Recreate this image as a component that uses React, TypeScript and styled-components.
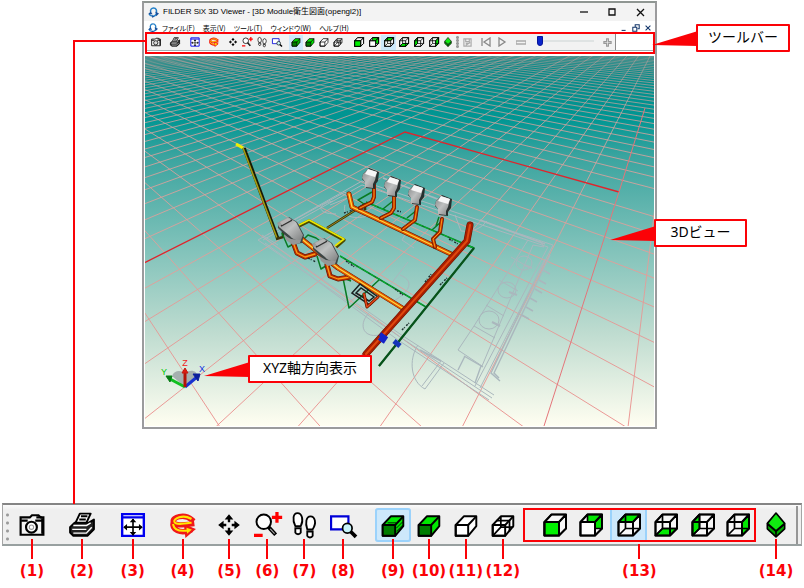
import React from "react";
import styled, { createGlobalStyle } from "styled-components";

const RED = "#fb0207";

const GlobalStyle = createGlobalStyle`
  * { box-sizing: border-box; }
  body { margin: 0; background: #fff; color: #000; font-family: "Noto Sans", "Noto Sans CJK JP", sans-serif; }
  button { padding: 0; border: 0; background: none; font: inherit; color: inherit; }
  svg { display: block; }
`;

const Page = styled.main`
  position: relative;
  padding: 1px 2px 8px;
`;

const ViewerFrame = styled.section`
  position: relative;
  margin: 0 145px 0 140px;
  border: 2px solid #9b9b9d;
  border-top-color: #8f9692;
  background: #fff;
`;

const TitleBar = styled.header`
  display: flex;
  align-items: center;
  height: 18px;
  padding: 0 10px 0 4px;
  gap: 4px;
  background: #f3f3f3;
`;

const Title = styled.h1`
  flex: 1;
  margin: 0;
  font-family: "Liberation Sans", "Noto Sans CJK JP", sans-serif;
  font-size: 8px;
  line-height: 16px;
  font-weight: 400;
  white-space: nowrap;
`;

const WindowButtons = styled.div`
  display: flex;
  gap: 18px;
`;

const MenuBar = styled.nav`
  display: flex;
  align-items: center;
  height: 11px;
  padding: 2px 3px 0 4px;
  gap: 4px;
  overflow: hidden;
`;

const MenuList = styled.div`
  display: flex;
  gap: 8px;
`;

const MenuItem = styled.button`
  font-family: "Noto Sans CJK JP", sans-serif;
  font-size: 7px;
  line-height: 8px;
  font-feature-settings: "palt";
  white-space: nowrap;
`;

const ChildButtons = styled.div`
  display: flex;
  gap: 4px;
  margin-left: auto;
`;

const ToolBar = styled.div`
  display: flex;
  margin-left: 1px;
  height: 22px;
  border: 2px solid ${RED};
  background: linear-gradient(#fff 16px, #9fb0b4 16px, #9fb0b4 17px, #fff 17px);
`;

const ToolSet = styled.div`
  display: flex;
  align-items: center;
  height: 16px;
  background: #f2f2f2;
  border-right: 1px solid #8b8b8b;
`;

const SmallTool = styled.button<{ $w: number; $gap?: number; $on?: boolean }>`
  display: grid;
  place-items: center;
  width: ${(p) => p.$w}px;
  height: 15px;
  margin-left: ${(p) => p.$gap ?? 0}px;
  background: ${(p) => (p.$on ? "#cde8fb" : "transparent")};
`;

const Grip = styled.span<{ $tall?: boolean }>`
  align-self: stretch;
  width: 3px;
  margin: ${(p) => (p.$tall ? "6px 0 2px 3px" : "2px 0 2px 1px")};
  background: radial-gradient(circle, #9a9a9a 1px, transparent 2px) 0 0 / 3px ${(p) => (p.$tall ? 8 : 3)}px;
`;

const Speed = styled.input`
  appearance: none;
  width: 57px;
  height: 14px;
  margin: 0 0 2px 7px;
  background: linear-gradient(#dfe3e3, #dfe3e3) center / 100% 2px no-repeat;
  &::-webkit-slider-thumb {
    appearance: none;
    width: 6px;
    height: 10px;
    background: #0a24cc;
    border: 1px solid #07159a;
    border-radius: 0 0 3px 3px;
  }
`;

const SceneArea = styled.div`
  position: relative;
  margin: 2px 1px 1px;
`;

const SceneSvg = styled.svg`
  width: 100%;
  height: auto;
`;

const Callout = styled.div<{ $w: number }>`
  position: absolute;
  width: ${(p) => p.$w}px;
  height: 28px;
  border: 2px solid ${RED};
  border-radius: 1px;
  background: #fff;
  font-family: "Noto Sans", "Noto Sans CJK JP", sans-serif;
  font-size: 14px;
  line-height: 21px;
  text-align: center;
  white-space: nowrap;
`;

const ToolbarCallout = styled(Callout)`
  top: 21px;
  right: -135px;
`;

const ViewCallout = styled(Callout)`
  top: 163px;
  right: -93px;
`;

const AxisCallout = styled(Callout)`
  bottom: 43px;
  left: 103px;
`;

const Pointer = styled.svg`
  position: absolute;
  top: 5px;
  right: 100%;
`;

const Connector = styled.div`
  position: absolute;
  left: 73px;
  top: 40px;
  width: 72px;
  height: 464px;
  border: solid ${RED};
  border-width: 2px 0 0 2px;
  pointer-events: none;
`;

const Enlarged = styled.section`
  margin-top: 74px;
`;

const Strip = styled.div`
  display: grid;
  grid-template-columns: 6fr 46fr 54fr 48fr 52fr 42fr 34fr 40fr 38fr 13fr 36fr 36fr 38fr 36fr 2fr 234fr 40fr 5fr;
  align-items: center;
  height: 43px;
  border: 1px solid #a5a5a5;
  border-top: 2px solid #858585;
  border-bottom: 2px solid #98a0a0;
  background: linear-gradient(#fbfbfb, #efefef 5px);
`;

const Legend = styled(Strip)`
  position: relative;
  height: 46px;
  margin-top: -9px;
  border-color: transparent;
  background: none;
`;

const BigTool = styled.button<{ $on?: boolean }>`
  display: grid;
  place-items: center;
  height: 34px;
  border-radius: 3px;
  background: ${(p) => (p.$on ? "#cde8fb" : "transparent")};
  box-shadow: ${(p) => (p.$on ? "inset 0 0 0 2px #9bd2fb" : "none")};
`;

const FaceGroup = styled.div`
  display: grid;
  grid-template-columns: 12fr 37fr 38fr 38fr 38fr 38fr 33fr;
  align-items: center;
  height: 34px;
  border: 2px solid ${RED};
`;

const FaceTool = styled.button<{ $on?: boolean }>`
  display: grid;
  place-items: center;
  height: 30px;
  background: ${(p) => (p.$on ? "#cde8fb" : "transparent")};
  border: solid #9bd2fb;
  border-width: ${(p) => (p.$on ? "0 2px" : "0")};
`;

const EndBar = styled.span`
  height: 38px;
  width: 2px;
  background: #969696;
`;

const Mark = styled.span<{ $short?: boolean }>`
  display: flex;
  flex-direction: column;
  align-items: center;
  color: ${RED};
  font: bold 15px/24px "DejaVu Sans", sans-serif;
  white-space: nowrap;
  width: 0;
  justify-self: center;
  &::before {
    content: "";
    flex: none;
    width: 2px;
    height: ${(p) => (p.$short ? 15 : 20)}px;
    margin-top: ${(p) => (p.$short ? 5 : 0)}px;
    background: ${RED};
  }
`;

type Face = "front" | "back" | "top" | "bottom" | "left" | "right";
type IconKind =
  | "camera" | "print" | "fit" | "rotate" | "move" | "zoom" | "walk" | "area"
  | "shadedLines" | "shaded" | "hidden" | "wire" | "iso" | Face;

const FACES: Record<Face, string> = {
  front: "M1.5 9H16V22.5H1.5Z",
  back: "M8.5 1.5H23V15.5H8.5Z",
  top: "M1.5 9L8.5 1.5H23L16 9Z",
  bottom: "M1.5 22.5L8.5 15.5H23L16 22.5Z",
  left: "M1.5 9L8.5 1.5V15.5L1.5 22.5Z",
  right: "M16 9L23 1.5V15.5L16 22.5Z",
};

function FaceCube({ face }: { face: Face }) {
  const solid = face === "front" || face === "back";
  return (
    <g strokeLinejoin="round" stroke="#000" strokeWidth="1.7" fill="none">
      <path d="M1.5 9L8.5 1.5H23V15.5L16 22.5H1.5Z" fill="#f8f8f8" />
      <path d={FACES[face]} fill="#00e800" />
      {solid ? (
        <path d="M1.5 9H16V22.5H1.5ZM16 9L23 1.5" fill={face === "front" ? "#00f000" : "#fff"} />
      ) : (
        <path d="M8.5 1.5V15.5H23M8.5 15.5L1.5 22.5" />
      )}
      <path d="M1.5 9L8.5 1.5H23V15.5L16 22.5H1.5ZM1.5 9H16V22.5M16 9L23 1.5" strokeWidth="2" />
    </g>
  );
}

function ModelCube({ kind }: { kind: IconKind }) {
  const shaded = kind === "shaded" || kind === "shadedLines";
  return (
    <g strokeLinejoin="round" stroke="#000" strokeWidth="1.8" fill="none">
      <path d="M2.5 12L10 4H21.5V13L14 22H2.5Z" fill={shaded ? "#00e800" : "#fff"} />
      <path d="M2.5 12H14V22H2.5Z" fill={shaded ? "#007c00" : "none"} />
      <path d="M14 12L21.5 4" />
      {kind === "shadedLines" && <path d="M15 15L21 9M15 18L21 12M7 10H15" strokeWidth=".8" />}
      {kind === "wire" && <path d="M10 4V14H21.5M10 14L2.5 22M6 8H18V18" strokeWidth="1.6" />}
    </g>
  );
}

function Icon({ kind, size = 26 }: { kind: IconKind; size?: number }) {
  let art: React.ReactNode;
  switch (kind) {
    case "camera":
      art = (
        <g fill="none" stroke="#000" strokeWidth="2">
          <path d="M1.5 5H10L12 3H18L20 5H22.5V21H1.5Z" fill="#f4f4f4" />
          <path d="M2 8H8M15 8H22M21.5 6V20M16 5H21" strokeWidth="2" />
          <circle cx="11.5" cy="14" r="5" fill="#fff" /><circle cx="11.5" cy="14" r="2" stroke="#999" strokeWidth="1" />
        </g>
      );
      break;
    case "print":
      art = (
        <g fill="#fff" stroke="#000" strokeWidth="1.8" strokeLinejoin="round">
          <path d="M6 10L10 1.5H20L16 10M11 4H17M9.5 7H15.5" />
          <path d="M5 10H18L23 7V16L17 22H4L1 19V14Z" fill="#222" />
          <path d="M4 12.5H16L20 10M3 16H16M4 19.5H16L21 14" stroke="#fff" strokeWidth="1.3" fill="none" />
        </g>
      );
      break;
    case "fit":
      art = (
        <g>
          <path d="M2 2H22V22H2ZM2 5H22" fill="#fff" stroke="#0000f0" strokeWidth="2.2" />
          <path d="M12 6.5V21.5M4 14H20" stroke="#000" strokeWidth="1.5" />
          <path d="M12 6L15 9.5H9ZM12 22L15 18.5H9ZM3 14L6.5 11V17ZM21 14L17.5 11V17Z" />
        </g>
      );
      break;
    case "rotate":
      art = (
        <g fill="none" strokeLinecap="square">
          <path d="M20 7C13 1 2 5 3 9C4 13 12 12 20 11M3 9C1 17 10 20 18 17" stroke="#f01818" strokeWidth="5" />
          <path d="M14 13L22 16L15 22Z" fill="#ffdf00" stroke="#f01818" strokeWidth="2" />
          <path d="M19 6C12 2 3 6 4 9C5 12 12 11 19 10M3 12C4 17 10 18 17 17" stroke="#ffe600" strokeWidth="1.9" />
        </g>
      );
      break;
    case "move":
      art = (
        <g>
          <path d="M12 2L16 7H8ZM12 22L16 17H8ZM2 12L7 8V16ZM22 12L17 8V16Z" />
          <path d="M12 6V9.5M12 14.5V18M6 12H9.5M14.5 12H18" stroke="#000" strokeWidth="2.2" />
        </g>
      );
      break;
    case "zoom":
      art = (
        <g fill="none" stroke="#000">
          <circle cx="9" cy="9" r="6.7" fill="#fff" strokeWidth="1.8" />
          <path d="M13.5 14L20 21" strokeWidth="3.6" /><path d="M15 15.5L19 20" stroke="#aaa" strokeWidth="1" />
          <path d="M0 21.5H8M16.5 5H26M21.2 0V10" stroke="#f00" strokeWidth="3" />
        </g>
      );
      break;
    case "walk":
      art = (
        <g fill="#fff" stroke="#000" strokeWidth="1.7">
          <path d="M6 1C2 1 1 7 4 13H9C12 7 10 1 6 1ZM4 15H9V19C8 21 5 21 4 19ZM18 4C14 4 13 10 15 16H20C24 10 22 4 18 4ZM15 18H20V22C19 24 16 24 15 22Z" />
        </g>
      );
      break;
    case "area":
      art = (
        <g fill="none">
          <path d="M1 4H17V16H1Z" stroke="#0000d8" strokeWidth="2" fill="#fff" />
          <circle cx="16" cy="15" r="4.4" fill="#c8f4fa" stroke="#000" strokeWidth="1.6" />
          <path d="M19 18L24 23" stroke="#000" strokeWidth="3.4" />
        </g>
      );
      break;
    case "iso":
      art = (
        <g stroke="#000" strokeWidth="1.5" strokeLinejoin="round">
          <path d="M4 11V15.5L12 23L20 15.5V11L12 18Z" fill="#00a800" />
          <path d="M12 1L20 10.5L12 17.5L4 10.5Z" fill="#10ea10" /><path d="M12 18V23" />
        </g>
      );
      break;
    case "shaded":
    case "shadedLines":
    case "hidden":
    case "wire":
      art = <ModelCube kind={kind} />;
      break;
    default:
      art = <FaceCube face={kind} />;
  }
  return <svg width={size} height={size} viewBox="0 0 24 24" overflow="visible" aria-hidden="true">{art}</svg>;
}

const Logo = ({ size }: { size: number }) => (
  <svg width={size} height={size} viewBox="0 0 12 12" aria-hidden="true">
    <path d="M3 6C2 3 4 1 6 1C9 1 10 4 9 7M2 7C1 9 3 10 6 10C8 10 8 9 9 8" fill="none" stroke="#2480c8" strokeWidth="1.6" />
    <path d="M0 8L3 5L5 8ZM8 5L12 7L9 10ZM4 9L7 10L5 12Z" fill="#174f9c" />
  </svg>
);

const Glyph = ({ d, size = 8, color = "#111" }: { d: string; size?: number; color?: string }) => (
  <svg width={size} height={size} viewBox="0 0 10 10" fill="none" stroke={color} strokeWidth="1.3" aria-hidden="true">
    <path d={d} />
  </svg>
);

const SMALL_TOOLS: { kind: IconKind; w: number; name: string; gap?: number; on?: boolean }[] = [
  { kind: "camera", w: 17, name: "撮影" },
  { kind: "print", w: 21, name: "印刷" },
  { kind: "fit", w: 19, name: "全体表示" },
  { kind: "rotate", w: 20, name: "回転" },
  { kind: "move", w: 14, name: "移動", gap: 2 },
  { kind: "zoom", w: 14, name: "拡大縮小" },
  { kind: "walk", w: 15, name: "ウォークスルー" },
  { kind: "area", w: 15, name: "範囲拡大" },
  { kind: "shadedLines", w: 14, name: "シェーディング稜線", gap: 5, on: true },
  { kind: "shaded", w: 14, name: "シェーディング" },
  { kind: "hidden", w: 14, name: "隠線" },
  { kind: "wire", w: 14, name: "ワイヤー" },
  { kind: "front", w: 15, name: "前", gap: 6 },
  { kind: "back", w: 15, name: "後" },
  { kind: "top", w: 15, name: "上", on: true },
  { kind: "bottom", w: 15, name: "下" },
  { kind: "left", w: 15, name: "左" },
  { kind: "right", w: 15, name: "右" },
  { kind: "iso", w: 14, name: "アイソメ" },
];

const FACE_ORDER: Face[] = ["front", "back", "top", "bottom", "left", "right"];

type Pt = [number, number];
const VANISH_U: Pt = [681, -5];
const VANISH_V: Pt = [-60, 2];
const CORNER: Pt = [405, 132];
const STEP_I = -0.03502;
const STEP_J = -0.0424;

/** Floor grid coordinate to screen position in perspective. */
function project(i: number, j: number): Pt {
  const a = i * STEP_I;
  const b = j * STEP_J;
  const w = 1 + a + b;
  return [
    (CORNER[0] + a * VANISH_V[0] + b * VANISH_U[0]) / w,
    (CORNER[1] + a * VANISH_V[1] + b * VANISH_U[1]) / w,
  ];
}

function rayThrough(v: Pt, p: Pt): string {
  const dx = p[0] - v[0];
  const dy = p[1] - v[1];
  const near = 45 / dy;
  const far = 2000 / Math.hypot(dx, dy);
  return `M${v[0] + dx * near} ${v[1] + dy * near}L${v[0] + dx * far} ${v[1] + dy * far}`;
}

const gridPath = (() => {
  const parts: string[] = [];
  for (let i = -75; i < 22; i++) if (i !== 0 && i !== 9) parts.push(rayThrough(VANISH_U, project(i, 0)));
  for (let j = -75; j < 22; j++) if (j !== 0) parts.push(rayThrough(VANISH_V, project(0, j)));
  return parts.join("");
})();

const Pipe = ({ d, w = 3, base = "#b52c00", shine = "#ff9a10" }: { d: string; w?: number; base?: string; shine?: string }) => (
  <g fill="none" strokeLinejoin="round" strokeLinecap="round">
    <path d={d} stroke="#5d1500" strokeWidth={w + 1} />
    <path d={d} stroke={base} strokeWidth={w} />
    <path d={d} stroke={shine} strokeWidth={Math.max(1, w / 3)} />
  </g>
);

const Urinal = ({ x, y }: { x: number; y: number }) => (
  <g transform={`translate(${x} ${y})`}>
    <path d="M-2 -1L8 3L7 12L4 16V20L-5 19L-5 14L-9 10L-8 5Z" fill="#27302f" />
    <path d="M-3 0L6 3L4 11L2 15V19L-6 18V13L-9 9L-8 5Z" fill="url(#ceramic)" />
    <path d="M-3 0L6 3L4 8L-6 5Z" fill="#f6f6f6" />
  </g>
);

const Toilet = ({ x, y }: { x: number; y: number }) => (
  <g transform={`translate(${x} ${y})`}>
    <path d="M1 7L12 0L20 5L27 18L25 26L17 27L7 17L1 11Z" fill="#3d4545" />
    <path d="M0 6L11 0L19 5L26 18L24 23C20 24 15 22 13 19L2 10Z" fill="url(#ceramic)" />
    <path d="M7 18L14 22L24 23L23 26L16 28L9 23Z" fill="#959797" />
    <path d="M4 9L15 3" stroke="#333" strokeWidth="1.5" />
    <path d="M3 5L11 1L14 3L5 8Z" fill="#b5b5b5" />
  </g>
);

function Scene() {
  return (
    <SceneSvg viewBox="145 56 509 370" role="img" aria-label="3Dビュー">
      <defs>
        <linearGradient id="sky" x1="0" y1="0" x2="0" y2="1">
          <stop offset="0" stopColor="#078785" />
          <stop offset=".17" stopColor="#009693" />
          <stop offset=".27" stopColor="#3aa49f" />
          <stop offset=".5" stopColor="#7bc0b8" />
          <stop offset=".75" stopColor="#bfdcd0" />
          <stop offset="1" stopColor="#fffef1" />
        </linearGradient>
        <linearGradient id="haze" gradientUnits="userSpaceOnUse" x1="0" y1="56" x2="0" y2="426">
          <stop offset="0" stopColor="#c9a09b" stopOpacity=".55" />
          <stop offset=".2" stopColor="#d8a39e" stopOpacity=".9" />
          <stop offset=".6" stopColor="#e59c98" />
          <stop offset="1" stopColor="#ea8c8a" />
        </linearGradient>
        <linearGradient id="ceramic" x1="0" y1="0" x2="1" y2="1">
          <stop offset="0" stopColor="#858787" />
          <stop offset=".5" stopColor="#bec0c0" />
          <stop offset="1" stopColor="#7e8080" />
        </linearGradient>
      </defs>
      <rect x="145" y="56" width="509" height="370" fill="url(#sky)" />
      <path d={gridPath} stroke="url(#haze)" strokeWidth=".9" fill="none" />
      <path d="M134 268L405 132L619 192" stroke="#e0242c" strokeWidth="1.3" fill="none" />
      <path d="M619 192L544 426M619 192L645 108" stroke="#e4757a" strokeWidth="1" fill="none" />

      <g stroke="#aab7bd" fill="none" strokeWidth="1">
        <path d="M258 240L362 181L553 245L480 388M263 240L362 185L548 247L475 386M267 235L345 192L350 197L330 205" />
        <path d="M258 240L400 337L492 398M263 237L400 334L494 395M265 243L398 340L489 400" />
        <path d="M262 235L278 245M540 241L544 247L533 245L482 366L458 350L474 326L528 240" />
        <path d="M550 255L494 373L499 378M545 259L491 373L500 381M481 366L475 383M465 356L458 370M464 356L483 367" strokeWidth="1.4" />
        <ellipse cx="489" cy="320" rx="10" ry="9" /><ellipse cx="507" cy="290" rx="9" ry="8" /><ellipse cx="524" cy="263" rx="8" ry="7" />
        <path d="M474 326L495 338M486 305L504 316M499 280L518 291M511 257L530 268" />
        <path d="M492 322L500 326M509 292L517 295M524 265L532 268" strokeWidth="2" />
        <path d="M522 315L529 319M526 307L533 311M530 298L537 302M535 289L542 293M539 280L546 284M543 270L550 274" strokeWidth="1.5" />
        <path d="M418 345C408 360 411 382 425 389L444 363M422 386L441 361M390 331C365 344 356 326 369 313M400 275C418 282 406 295 390 303M408 262L390 285M333 201C315 205 318 214 336 214M345 205C342 216 352 220 368 216M410 226L402 240L414 248M455 215L461 231C474 233 482 227 487 221" />
        <path d="M441 361L420 350M383 178L440 200M480 220L545 244" strokeWidth="1.8" />
      </g>

      <g fill="none" strokeLinejoin="round">
        <path d="M236 144L243 148" stroke="#eef000" strokeWidth="3" />
        <path d="M244 148L278 239" stroke="#181b05" strokeWidth="3.5" /><path d="M243 148L277 238" stroke="#a49b12" strokeWidth="1.6" />
        <path d="M276 239L283 237V232M327 228L365 204V210" stroke="#39340a" strokeWidth="2.6" />
        <path d="M327 228L365 204" stroke="#9c861b" strokeWidth="1" />
        <path d="M299 226L309 221L344 240L336 247" stroke="#4a4a00" strokeWidth="3.4" />
        <path d="M299 225L309 220L344 239L335 246" stroke="#ece600" strokeWidth="1.7" />
        <g stroke="#087b23" strokeWidth="1.5">
          <path d="M366 202L474 248L379 366M340 256L426 307M364 204L358 200L372 192M383 209L393 201M407 218L417 210M432 230L441 222M436 226L439 217" />
          <path d="M282 233L288 247L297 242M304 239L308 235L316 238L323 243M317 256L321 269L329 264M343 278L349 308L380 279M343 278L351 281M474 248L466 245" />
        </g>
        <path d="M366 202L474 248M340 256L426 307" stroke="#00c936" strokeWidth=".8" strokeDasharray="5 2" />
      </g>

      <Pipe d="M349 194L352 207L453 255" w={4} base="#e05800" shine="#ffd83d" />
      <Pipe d="M374 185V197L372 202L360 208" />
      <Pipe d="M394 197V208L391 213L381 218" />
      <Pipe d="M417 207L415 220L403 229" />
      <Pipe d="M442 219L440 232L433 239L435 247" />
      <Pipe d="M293 242L297 253L305 257L315 254" w={4} />
      <Pipe d="M327 265L330 276L338 279L350 277" w={4} />
      <Pipe d="M298 236L338 268L404 309" w={4} base="#e05800" shine="#ffd83d" />
      <path d="M352 293L360 284L378 297L370 305ZM356 293L361 288L374 297L369 301Z" fill="none" stroke="#182020" strokeWidth="1.5" />
      <Pipe d="M364 294L367 307L378 297" w={2} shine="#e65025" />
      <Pipe d="M470 225L467 241L458 251L366 354" w={6} base="#a91e00" shine="#e0480e" />
      <path d="M474 248L379 366" stroke="#07521a" strokeWidth="2.2" />
      <path d="M380 334L387 339M379 338L385 342" stroke="#1424c8" strokeWidth="4" />
      <path d="M394 341L400 346" stroke="#1434ba" strokeWidth="5" />
      <path d="M344 213L353 210M397 211L403 212M449 239L458 244M425 282L432 273M440 285L448 277M402 330L409 323M346 261L356 268M395 289L403 295M308 258L316 262" stroke="#203030" strokeWidth="1.5" strokeDasharray="2 1 1 2" fill="none" />

      <Urinal x={371} y={169} /><Urinal x={393} y={177} /><Urinal x={417} y={185} /><Urinal x={444} y={196} />
      <Toilet x={277} y={217} /><Toilet x={312} y={238} />

      <g>
        <path d="M185 387L172 376C174 370 181 370 185 373C190 369 198 370 197 377Z" fill="#a5b0af" />
        <path d="M185 387L170 379" stroke="#10bf20" strokeWidth="3" /><path d="M166 376L172 376L170 382Z" fill="#067c14" stroke="#067c14" />
        <path d="M185 387L197 377" stroke="#1832d0" strokeWidth="3" /><path d="M200 374L193 374L198 381Z" fill="#0c1f9c" stroke="#0c1f9c" />
        <path d="M185 387V373" stroke="#b41207" strokeWidth="3" /><path d="M182 373L185 368L188 373Z" fill="#e11a10" stroke="#c11a10" />
        <g fontFamily="Liberation Sans, sans-serif" fontSize="9" textAnchor="middle">
          <text x="185" y="366" fill="#f02020">Z</text>
          <text x="202" y="372" fill="#1030e0">X</text>
          <text x="164" y="375" fill="#00c800">Y</text>
        </g>
      </g>
    </SceneSvg>
  );
}

const LeftPointer = () => (
  <Pointer width="46" height="15" viewBox="0 0 46 15" aria-hidden="true">
    <path d="M0 14L46 0V15Z" fill={RED} />
  </Pointer>
);

const MENUS = ["ファイル(F)", "表示(V)", "ツール(T)", "ウィンドウ(W)", "ヘルプ(H)"];

export default function App() {
  const numbered = SMALL_TOOLS.slice(0, 12);
  return (
    <>
      <GlobalStyle />
      <Page>
        <ViewerFrame>
          <TitleBar>
            <Logo size={11} />
            <Title>FILDER SiX 3D Viewer - [3D Module衛生図面(opengl2)]</Title>
            <WindowButtons>
              <button aria-label="最小化"><Glyph d="M1 5H9" size={10} /></button>
              <button aria-label="最大化"><Glyph d="M2 2H8V8H2Z" size={10} /></button>
              <button aria-label="閉じる"><Glyph d="M2 2L9 9M9 2L2 9" size={10} /></button>
            </WindowButtons>
          </TitleBar>
          <MenuBar>
            <Logo size={10} />
            <MenuList>
              {MENUS.map((m) => <MenuItem key={m}>{m}</MenuItem>)}
            </MenuList>
            <ChildButtons>
              <button aria-label="子ウィンドウ最小化"><Glyph d="M2 8H7" color="#123569" /></button>
              <button aria-label="子ウィンドウ復元"><Glyph d="M4 4V1H9V6H7M1 4H6V9H1Z" color="#123569" /></button>
              <button aria-label="子ウィンドウを閉じる"><Glyph d="M2 2L8 8M8 2L2 8" color="#123569" /></button>
            </ChildButtons>
          </MenuBar>
          <ToolBar role="toolbar">
            <ToolSet>
              {SMALL_TOOLS.map((t) => (
                <SmallTool key={t.kind} $w={t.w} $gap={t.gap} $on={t.on} aria-label={t.name}>
                  <Icon kind={t.kind} size={10} />
                </SmallTool>
              ))}
              <Grip />
              <SmallTool $w={16} aria-label="録画"><Glyph d="M1 1H9V9H1ZM3 1V4H7V1M3 6H7M3 8L8 5" size={9} color="#aaa" /></SmallTool>
              <SmallTool $w={18} $gap={2} aria-label="先頭へ"><Glyph d="M1 1V9M9 1V9L3 5Z" size={10} color="#888" /></SmallTool>
              <SmallTool $w={14} aria-label="再生"><Glyph d="M2 1V9L8 5Z" size={10} color="#888" /></SmallTool>
              <SmallTool $w={18} $gap={3} aria-label="減速"><Glyph d="M0 4H10V7H0Z" size={10} color="#aaa" /></SmallTool>
              <Speed type="range" aria-label="速度" min={0} max={100} defaultValue={0} />
              <SmallTool $w={16} $gap={5} aria-label="加速"><Glyph d="M4 1H6V4H9V6H6V9H4V6H1V4H4Z" size={9} color="#999" /></SmallTool>
            </ToolSet>
          </ToolBar>
          <SceneArea>
            <Scene />
            <ViewCallout $w={93}>3Dビュー<LeftPointer /></ViewCallout>
            <AxisCallout $w={124}>XYZ軸方向表示<LeftPointer /></AxisCallout>
          </SceneArea>
          <ToolbarCallout $w={94}>ツールバー<LeftPointer /></ToolbarCallout>
        </ViewerFrame>

        <Enlarged>
          <Strip role="toolbar">
            <Grip $tall />
            {numbered.map((t, n) => (
              <React.Fragment key={t.kind}>
                {n === 8 && <span />}
                <BigTool $on={n === 8} aria-label={t.name}><Icon kind={t.kind} /></BigTool>
              </React.Fragment>
            ))}
            <span />
            <FaceGroup>
              <span />
              {FACE_ORDER.map((f) => (
                <FaceTool key={f} $on={f === "top"} aria-label={f}><Icon kind={f} size={24} /></FaceTool>
              ))}
            </FaceGroup>
            <BigTool aria-label="アイソメ"><Icon kind="iso" /></BigTool>
            <EndBar />
          </Strip>
          <Legend>
            <span />
            {numbered.map((t, n) => (
              <React.Fragment key={t.kind}>
                {n === 8 && <span />}
                <Mark>({n + 1})</Mark>
              </React.Fragment>
            ))}
            <span />
            <Mark $short>(13)</Mark>
            <Mark>(14)</Mark>
            <span />
          </Legend>
        </Enlarged>
        <Connector />
      </Page>
    </>
  );
}
